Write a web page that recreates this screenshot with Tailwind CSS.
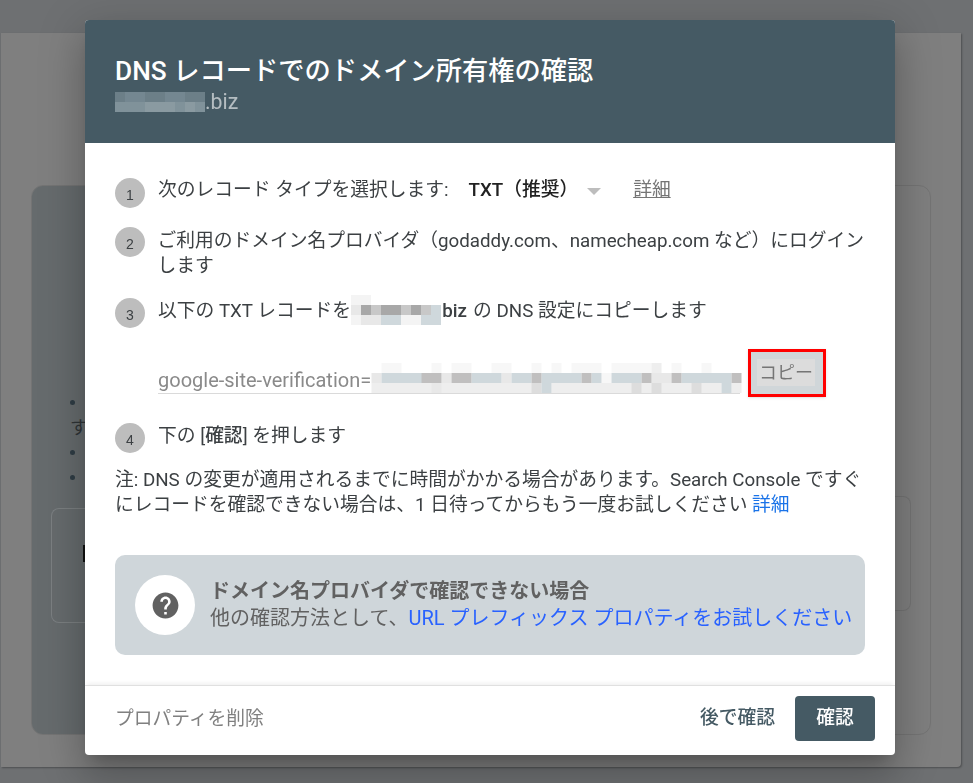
<!DOCTYPE html>
<html lang="ja">
<head>
    <meta charset="UTF-8">
    <title>DNS レコードでのドメイン所有権の確認</title>
    <script src="https://cdn.jsdelivr.net/npm/@tailwindcss/browser@4"></script>
</head>
<body class="h-[783px] overflow-hidden bg-[#6e7072] font-['Roboto','Noto_Sans_CJK_JP',sans-serif]">
    <!-- Dimmed page behind the dialog -->
    <div class="pt-[33px] pl-px w-[961px]">
        <div class="h-[734px] bg-[#7f7f7f] rounded-br-sm pt-[152px] px-[30px] shadow-[1px_1px_2px_rgba(0,0,0,.3)]">
            <div class="relative h-[550px] rounded-xl border border-[#747474] overflow-hidden">
                <div class="w-1/2 h-full bg-[#666b6d] pl-[38px] pt-[204px] text-[18px] text-[#2f3437]">
                    <div class="h-[25px] pt-[10px]"><div class="w-[5px] h-[5px] rounded-full bg-[#2f3d45]"></div></div>
                    <div class="h-[25px] leading-[25px]">す</div>
                    <div class="h-[25px] pt-[10px]"><div class="w-[5px] h-[5px] rounded-full bg-[#2f3d45]"></div></div>
                    <div class="h-[25px] pt-[10px]"><div class="w-[5px] h-[5px] rounded-full bg-[#2f3d45]"></div></div>
                </div>
                <!-- inner card pieces either side of the dialog -->
                <div class="absolute left-[19px] top-[322px] w-[60px] h-[115px] rounded-l-lg border border-r-0 border-[#7b7f81]">
                    <div class="mt-[36px] ml-[31px] w-[3px] h-[17px] bg-[#111]"></div>
                </div>
                <div class="absolute right-[19px] top-[310px] w-[40px] h-[115px] rounded-r-lg border border-l-0 border-[#747474]"></div>
            </div>
        </div>
    </div>

    <!-- Dialog -->
    <div class="fixed left-[85px] top-[20px] w-[810px] h-[735px] flex flex-col bg-white rounded-sm shadow-[0_11px_15px_-7px_rgba(0,0,0,.2),0_24px_38px_3px_rgba(0,0,0,.14),0_9px_46px_8px_rgba(0,0,0,.12)]">
        <header class="h-[123px] shrink-0 bg-[#455a64] rounded-t-sm px-[30px] pt-[33px]">
            <h1 class="text-[26.25px] leading-[36px] font-medium text-white">DNS レコードでのドメイン所有権の確認</h1>
            <div class="flex items-center h-[24px] mt-px text-[21.25px] text-white/60">
                <svg class="w-[90px] h-[20px] shrink-0" viewBox="0 0 90 20">
                    <path fill="#6c7f88" d="M0 0h90v10H0z"/>
                    <path fill="#748791" d="M10 0h20v10H10zM50 0h20v10H50z"/>
                    <path fill="#80929a" d="M0 10h90v10H0z"/>
                    <path fill="#8a9aa1" d="M30 10h30v10H30zM70 10h10v10H70z"/>
                </svg>.biz
            </div>
        </header>

        <main class="flex-1 px-[30px] pt-[35px] text-[18.75px] text-[#3c4043]">
            <div class="flex h-[30px]">
                <span class="w-[30px] h-[30px] shrink-0 rounded-full bg-[#bdbdbd] flex items-center justify-center pt-[4px] text-[14px] font-['Liberation_Sans',sans-serif]">1</span>
                <div class="flex items-center h-[25px] ml-[13px]">
                    <span>次のレコード タイプを選択します:</span>
                    <b class="ml-[20px] font-medium text-[#212121]">TXT（推奨）</b>
                    <span class="ml-[9px] mt-[2px] w-0 h-0 border-x-[7px] border-t-[7px] border-x-transparent border-t-[#bdbdbd]"></span>
                    <a class="ml-[32px] text-[#757575] underline">詳細</a>
                </div>
            </div>

            <div class="flex mt-[19px]">
                <span class="w-[30px] h-[30px] shrink-0 rounded-full bg-[#bdbdbd] flex items-center justify-center pt-[4px] text-[14px] font-['Liberation_Sans',sans-serif]">2</span>
                <p class="ml-[12.5px] leading-[25px] mt-[2px]">ご利用のドメイン名プロバイダ（godaddy.com、namecheap.com など）にログインします</p>
            </div>

            <div class="flex h-[30px] mt-[19px]">
                <span class="w-[30px] h-[30px] shrink-0 rounded-full bg-[#bdbdbd] flex items-center justify-center pt-[4px] text-[14px] font-['Liberation_Sans',sans-serif]">3</span>
                <div class="flex items-center h-[25px] ml-[13px] mt-px">
                    <span>以下の TXT レコードを</span>
                    <svg class="relative z-10 w-[90px] h-[30px] shrink-0 -mt-[3px]" viewBox="0 0 90 30">
                        <path fill="#f4f4f4" d="M0 0h20v10H0zM0 20h10v10H0zM50 20h20v10H50z"/>
                        <path fill="#e8e8e8" d="M0 10h10v10H0zM10 20h20v10H10z"/>
                        <path fill="#a8a8a8" d="M10 10h10v10H10zM30 10h20v10H30zM60 10h10v10H60z"/>
                        <path fill="#c8c8c8" d="M20 10h10v10H20zM50 10h10v10H50zM70 10h10v10H70z"/>
                        <path fill="#cfd8dc" d="M80 10h10v10H80zM30 20h20v10H30zM70 20h20v10H70z"/>
                    </svg>
                    <b class="-ml-[4px] font-medium">.biz</b>
                    <span class="ml-[6px]">の DNS 設定にコピーします</span>
                </div>
            </div>

            <div class="flex items-start h-[48px] mt-[21px] ml-[43px]">
                <div class="flex items-end w-[582px] h-[45px] border-b border-[#dadada]">
                    <span class="text-[#8a8a8a] text-[20px] leading-[26px] whitespace-nowrap">google-site-verification=</span>
                    <svg class="w-[371px] h-[30px] shrink-0 ml-auto" viewBox="0 0 370 30">
                        <path fill="#f7f7f7" d="M10 0h20v10H10zM60 0h10v10H60zM80 0h20v10H80zM120 0h20v10H120zM160 0h10v10H160zM180 0h10v10H180zM200 0h30v10H200zM240 0h40v10H240zM300 0h10v10H300zM330 0h10v10H330zM230 10h10v10H230z"/>
                        <path fill="#eeeeee" d="M280 0h10v10H280zM0 20h170v10H0zM180 20h170v10H180zM360 20h10v10H360z"/>
                        <path fill="#e8e8e8" d="M0 10h10v10H0zM70 10h10v10H70zM130 10h10v10H130zM280 10h20v10H280zM60 20h10v10H60z"/>
                        <path fill="#dddddd" d="M160 20h10v10H160zM260 20h10v10H260zM280 20h10v10H280zM320 20h10v10H320z"/>
                        <path fill="#cfd8dc" d="M10 10h50v10H10zM100 10h30v10H100zM140 10h20v10H140zM170 10h40v10H170zM220 10h10v10H220zM240 10h30v10H240zM310 10h50v10H310zM170 20h10v10H170zM350 20h10v10H350z"/>
                        <path fill="#c0bfbf" d="M50 10h20v10H50zM80 10h20v10H80zM160 10h10v10H160zM210 10h10v10H210zM270 10h10v10H270zM300 10h10v10H300zM360 10h10v10H360z"/>
                    </svg>
                </div>
                <div class="ml-[8px] w-[78px] h-[48px] border-[3px] border-[#ff0000] bg-[#d0d6d9] shadow-sm flex items-center justify-center">
                    <span class="-ml-[2px] -mt-[2px] px-[2px] leading-[27px] bg-[#dcdcdc] text-[#757575] text-[18px]">コピー</span>
                </div>
            </div>

            <div class="flex h-[30px] mt-[26px]">
                <span class="w-[30px] h-[30px] shrink-0 rounded-full bg-[#bdbdbd] flex items-center justify-center pt-[4px] text-[14px] font-['Liberation_Sans',sans-serif]">4</span>
                <div class="flex items-center h-[25px] ml-[13px] mt-px">下の [<b class="font-medium">確認</b>] を押します</div>
            </div>

            <p class="mt-[15px] leading-[25px]">注: DNS の変更が適用されるまでに時間がかかる場合があります。Search Console ですぐにレコードを確認できない場合は、1 日待ってからもう一度お試しください <a class="text-[#1a73e8]">詳細</a></p>

            <div class="flex items-center h-[100px] mt-[37px] px-[20px] rounded-[10px] bg-[#cfd6da]">
                <div class="w-[60px] h-[60px] rounded-full bg-white flex items-center justify-center shrink-0">
                    <svg class="w-[31px] h-[31px]" viewBox="0 0 24 24" fill="#616161"><path d="M12 2C6.48 2 2 6.48 2 12s4.48 10 10 10 10-4.48 10-10S17.52 2 12 2zm1 17h-2v-2h2v2zm2.07-7.75l-.9.92C13.45 12.9 13 13.5 13 15h-2v-.5c0-1.1.45-2.1 1.17-2.83l1.24-1.26c.37-.36.59-.86.59-1.41 0-1.1-.9-2-2-2s-2 .9-2 2H8c0-2.21 1.79-4 4-4s4 1.79 4 4c0 .88-.36 1.68-.93 2.25z"/></svg>
                </div>
                <div class="ml-[15px] leading-[27px] text-[#616161] text-[20px] whitespace-nowrap">
                    <div class="font-bold">ドメイン名プロバイダで確認できない場合</div>
                    <div>他の確認方法として、<a class="text-[#2962ff]">URL プレフィックス プロパティをお試しください</a></div>
                </div>
            </div>
        </main>

        <footer class="h-[70px] shrink-0 flex items-start pt-[10px] pr-[20px] pl-[30px] border-t border-[#e0e0e0] shadow-[0_-4px_4px_-2px_rgba(0,0,0,.06)] text-[18.75px]">
            <span class="text-[#808080] leading-[47px]">プロパティを削除</span>
            <span class="ml-auto font-medium text-[#455a64] leading-[45px]">後で確認</span>
            <button class="ml-[20px] w-[80px] h-[45px] rounded bg-[#455a64] text-white font-medium">確認</button>
        </footer>
    </div>
</body>
</html>
